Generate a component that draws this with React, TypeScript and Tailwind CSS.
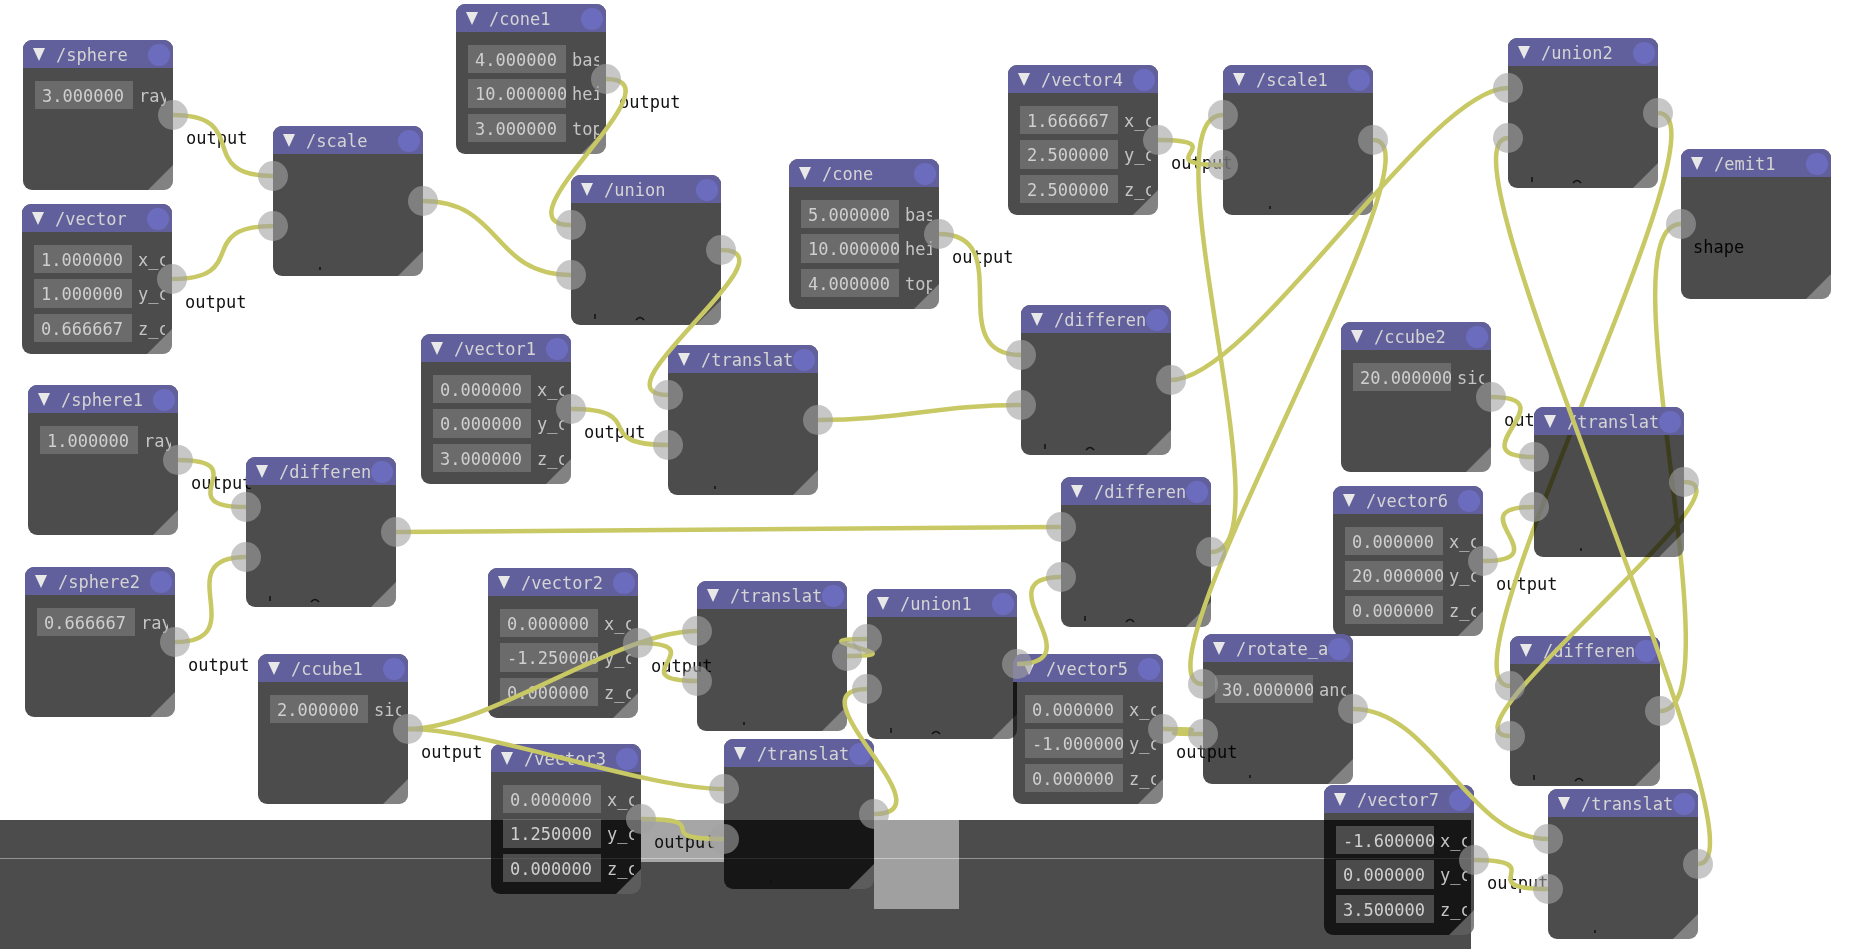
const mono = "font-['DejaVu_Sans_Mono',monospace]";

type NodeData = {
  id: string;
  x: number;
  y: number;
  title: string;
  rows?: [string, string][];
  inputs?: number;
  label?: string;
  mark?: "dot" | "pair";
};

const xyz = (a: string, b: string, c: string): [string, string][] => [
  [a, "x_c"],
  [b, "y_c"],
  [c, "z_c"],
];

const nodes: NodeData[] = [
  { id: "sphere", x: 23, y: 40, title: "/sphere", rows: [["3.000000", "ray"]], label: "output" },
  { id: "vector", x: 22, y: 204, title: "/vector", rows: xyz("1.000000", "1.000000", "0.666667"), label: "output" },
  { id: "scale", x: 273, y: 126, title: "/scale", inputs: 2, mark: "dot" },
  { id: "cone1", x: 456, y: 4, title: "/cone1", rows: [["4.000000", "bas"], ["10.000000", "hei"], ["3.000000", "top"]], label: "output" },
  { id: "union", x: 571, y: 175, title: "/union", inputs: 2, mark: "pair" },
  { id: "cone", x: 789, y: 159, title: "/cone", rows: [["5.000000", "bas"], ["10.000000", "hei"], ["4.000000", "top"]], label: "output" },
  { id: "vector4", x: 1008, y: 65, title: "/vector4", rows: xyz("1.666667", "2.500000", "2.500000"), label: "output" },
  { id: "scale1", x: 1223, y: 65, title: "/scale1", inputs: 2, mark: "dot" },
  { id: "union2", x: 1508, y: 38, title: "/union2", inputs: 2, mark: "pair" },
  { id: "emit1", x: 1681, y: 149, title: "/emit1", inputs: 1, label: "shape" },
  { id: "vector1", x: 421, y: 334, title: "/vector1", rows: xyz("0.000000", "0.000000", "3.000000"), label: "output" },
  { id: "translate", x: 668, y: 345, title: "/translat", inputs: 2, mark: "dot" },
  { id: "difference", x: 1021, y: 305, title: "/differen", inputs: 2, mark: "pair" },
  { id: "sphere1", x: 28, y: 385, title: "/sphere1", rows: [["1.000000", "ray"]], label: "output" },
  { id: "difference1", x: 246, y: 457, title: "/differen", inputs: 2, mark: "pair" },
  { id: "sphere2", x: 25, y: 567, title: "/sphere2", rows: [["0.666667", "ray"]], label: "output" },
  { id: "ccube1", x: 258, y: 654, title: "/ccube1", rows: [["2.000000", "sic"]], label: "output" },
  { id: "ccube2", x: 1341, y: 322, title: "/ccube2", rows: [["20.000000", "sic"]], label: "output" },
  { id: "vector6", x: 1333, y: 486, title: "/vector6", rows: xyz("0.000000", "20.000000", "0.000000"), label: "output" },
  { id: "difference2", x: 1061, y: 477, title: "/differen", inputs: 2, mark: "pair" },
  { id: "vector2", x: 488, y: 568, title: "/vector2", rows: xyz("0.000000", "-1.250000", "0.000000"), label: "output" },
  { id: "translate1", x: 697, y: 581, title: "/translat", inputs: 2, mark: "dot" },
  { id: "union1", x: 867, y: 589, title: "/union1", inputs: 2, mark: "pair" },
  { id: "vector5", x: 1013, y: 654, title: "/vector5", rows: xyz("0.000000", "-1.000000", "0.000000"), label: "output" },
  { id: "rotate", x: 1203, y: 634, title: "/rotate_a", rows: [["30.000000", "anc"]], inputs: 2, mark: "dot" },
  { id: "difference3", x: 1510, y: 636, title: "/differen", inputs: 2, mark: "pair" },
  { id: "vector3", x: 491, y: 744, title: "/vector3", rows: xyz("0.000000", "1.250000", "0.000000"), label: "output" },
  { id: "translate2", x: 724, y: 739, title: "/translat", inputs: 2, mark: "dot" },
  { id: "vector7", x: 1324, y: 785, title: "/vector7", rows: xyz("-1.600000", "0.000000", "3.500000"), label: "output" },
  { id: "translate3", x: 1548, y: 789, title: "/translat", inputs: 2, mark: "dot" },
  { id: "translate4", x: 1534, y: 407, title: "/translat", inputs: 2, mark: "dot" },
];

const byId = Object.fromEntries(nodes.map((n) => [n.id, n]));

// these three run underneath /translat on the right, the rest sit on top of every node
const wiresUnder: [string, string, number][] = [
  ["union2", "difference3", 0],
  ["difference3", "emit1", 0],
  ["translate4", "difference3", 1],
];

const wiresOver: [string, string, number][] = [
  ["sphere", "scale", 0],
  ["vector", "scale", 1],
  ["scale", "union", 1],
  ["cone1", "union", 0],
  ["union", "translate", 0],
  ["vector1", "translate", 1],
  ["translate", "difference", 1],
  ["cone", "difference", 0],
  ["difference", "union2", 0],
  ["vector4", "scale1", 1],
  ["difference2", "scale1", 0],
  ["scale1", "rotate", 0],
  ["vector5", "rotate", 1],
  ["rotate", "translate3", 0],
  ["vector7", "translate3", 1],
  ["translate3", "union2", 1],
  ["ccube1", "translate1", 0],
  ["ccube1", "translate2", 0],
  ["vector2", "translate1", 1],
  ["vector3", "translate2", 1],
  ["translate1", "union1", 0],
  ["translate2", "union1", 1],
  ["union1", "difference2", 1],
  ["difference1", "difference2", 0],
  ["sphere1", "difference1", 0],
  ["sphere2", "difference1", 1],
  ["ccube2", "translate4", 0],
  ["vector6", "translate4", 1],
];

function inputY(n: NodeData, index: number) {
  return n.inputs === 1 ? n.y + 75 : n.y + 50 + index * 50;
}

function Wires({ list }: { list: [string, string, number][] }) {
  return (
    <svg className="absolute left-0 top-0 h-[949px] w-[1851px]" fill="none" stroke="#c8c864" strokeWidth={4.5}>
      {list.map(([from, to, index]) => {
        const a = byId[from];
        const b = byId[to];
        const x1 = a.x + 150;
        const y1 = a.y + 75;
        const x2 = b.x;
        const y2 = inputY(b, index);
        return (
          <path
            key={from + to + index}
            d={`M${x1} ${y1} C${x1 + 80} ${y1} ${x2 - 80} ${y2} ${x2} ${y2}`}
          />
        );
      })}
    </svg>
  );
}

function Node({ node }: { node: NodeData }) {
  return (
    <div
      className={`absolute flex h-[150px] w-[150px] flex-col overflow-hidden rounded-[9px] bg-black/70 text-[17px] leading-[20px] ${mono}`}
      style={{ left: node.x, top: node.y }}
    >
      <div className="relative flex h-[28px] shrink-0 items-center bg-[#62609c] pl-[10px] text-[#d4d4d4]">
        <svg className="h-[13px] w-[12px]" viewBox="0 0 12 13">
          <polygon points="0,0 12,0 6,13" fill="#e8e8e8" />
        </svg>
        <span className="ml-[11px] whitespace-nowrap pt-[2px]">{node.title}</span>
        <div className="absolute left-[125px] top-[4px] h-[22px] w-[22px] rounded-full bg-[#6e6ec2]/90" />
      </div>
      {node.rows && (
        <div className="flex flex-col gap-[6.2px] pl-3 pt-[12.5px]">
          {node.rows.map(([value, label]) => (
            <div key={label} className="flex items-center">
              <div className="flex h-[28.5px] w-[97.5px] shrink-0 items-center overflow-hidden whitespace-nowrap bg-[#9a9a9a]/40 pl-[7px] pt-[2px] text-[#cfcfcf]">
                {value}
              </div>
              <div className="ml-[6.5px] w-[27px] shrink-0 overflow-hidden pt-[2px] text-[#c4c4c4]">{label}</div>
            </div>
          ))}
        </div>
      )}
      {node.mark && (
        <svg className="absolute left-0 top-[138px] h-[8px] w-[150px]" fill="none" stroke="#111" strokeWidth={1.5}>
          {node.mark === "dot" ? (
            <path d="M47 3v3" />
          ) : (
            <>
              <path d="M24 1v5" />
              <path d="M65 7q4 -5 8 0" />
            </>
          )}
        </svg>
      )}
      <div className="absolute bottom-0 right-0 h-[25px] w-[25px] bg-white/30 [clip-path:polygon(100%_0,100%_100%,0_100%)]" />
    </div>
  );
}

function Pin({ x, y }: { x: number; y: number }) {
  return (
    <div
      className="absolute h-[30px] w-[30px] rounded-full bg-[#a2a2a2]/60"
      style={{ left: x - 15, top: y - 15 }}
    />
  );
}

export default function App() {
  const top = byId["translate4"];
  return (
    <div className="relative h-[949px] w-[1851px] overflow-hidden bg-white blur-[0.4px]">
      {/* bottom panel behind the graph */}
      <div className="absolute bottom-0 left-0 h-[129px] w-[1471px] bg-black/70">
        <div className="absolute left-[641px] top-0 h-[42px] w-[83px] bg-[#a6a6a6]" />
        <div className="absolute left-[874px] top-0 h-[89px] w-[85px] bg-[#a0a0a0]" />
        <div className="absolute left-0 top-[38px] h-px w-full bg-white/40" />
      </div>

      {nodes
        .filter((n) => n.label)
        .map((n) => (
          <div
            key={n.id}
            className={`absolute text-[17px] leading-[20px] text-[#111] ${mono}`}
            style={{ left: n.label === "shape" ? n.x + 12 : n.x + 163, top: n.y + 88 }}
          >
            {n.label}
          </div>
        ))}

      {nodes
        .filter((n) => n !== top)
        .map((n) => (
          <Node key={n.id} node={n} />
        ))}
      <Wires list={wiresUnder} />
      <Node node={top} />
      <Wires list={wiresOver} />

      {nodes.map((n) => (
        <div key={n.id}>
          {Array.from({ length: n.inputs ?? 0 }).map((_, i) => (
            <Pin key={i} x={n.x} y={inputY(n, i)} />
          ))}
          {n.id !== "emit1" && <Pin x={n.x + 150} y={n.y + 75} />}
        </div>
      ))}
    </div>
  );
}
